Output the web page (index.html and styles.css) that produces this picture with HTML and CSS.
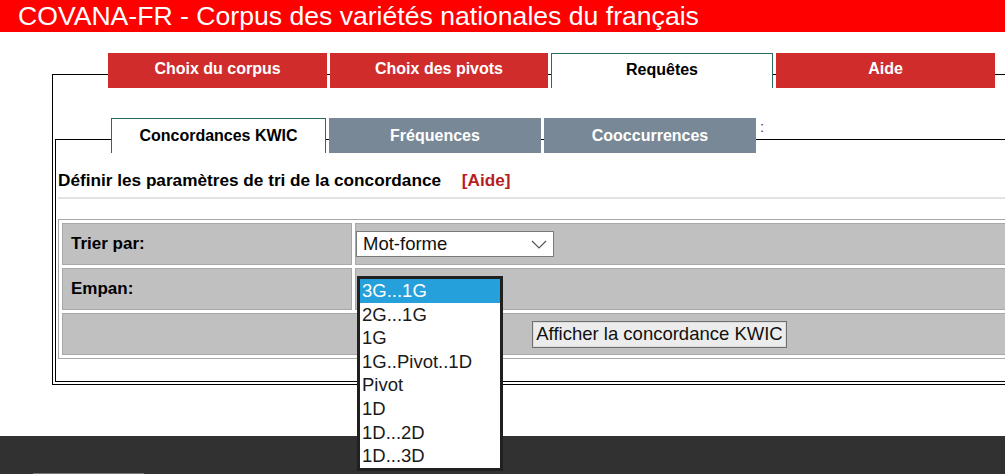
FILE: index.html
```html
<!DOCTYPE html>
<html lang="fr">
<head>
<meta charset="utf-8">
<title>COVANA-FR</title>
<link rel="stylesheet" href="styles.css">
</head>
<body>
<header class="banner">COVANA-FR - Corpus des variétés nationales du français</header>
<div class="page">
  <nav class="tabs main-tabs">
    <a class="tab w219">Choix du corpus</a>
    <a class="tab w218">Choix des pivots</a>
    <a class="tab active w222">Requêtes</a>
    <a class="tab w219">Aide</a>
  </nav>
  <div class="outer">
    <nav class="tabs sub-tabs">
      <a class="subtab active w215">Concordances KWIC</a>
      <a class="subtab w212">Fréquences</a>
      <a class="subtab w212">Cooccurrences</a>
      <span class="colon">:</span>
    </nav>
    <div class="inner">
      <h2 class="heading">Définir les paramètres de tri de la concordance <a class="help">[Aide]</a></h2>
      <div class="rule"></div>
      <table class="form">
        <tr>
          <td class="label">Trier par:</td>
          <td class="field">
            <div class="select">
              <span>Mot-forme</span>
              <svg class="chev" width="16" height="9" viewBox="0 0 16 9"><polyline points="1,1 8,8 15,1" fill="none" stroke="#555" stroke-width="1.2"/></svg>
            </div>
          </td>
        </tr>
        <tr>
          <td class="label">Empan:</td>
          <td class="field popup-host">
            <ul class="popup">
              <li class="sel">3G...1G</li>
              <li>2G...1G</li>
              <li>1G</li>
              <li>1G..Pivot..1D</li>
              <li>Pivot</li>
              <li>1D</li>
              <li>1D...2D</li>
              <li>1D...3D</li>
            </ul>
          </td>
        </tr>
        <tr>
          <td class="submit" colspan="2"><button class="btn">Afficher la concordance KWIC</button></td>
        </tr>
      </table>
    </div>
  </div>
</div>
<footer class="footer"><div class="footbar"></div></footer>
</body>
</html>
```

FILE: styles.css
```css
html, body {
  margin: 0;
  padding: 0;
  overflow: hidden;
  background: #fff;
  font-family: "Liberation Sans", Arial, sans-serif;
}

.banner {
  height: 32px;
  line-height: 32px;
  background: #ff0000;
  color: #fff;
  font-size: 26.6px;
  padding-left: 18px;
  white-space: nowrap;
}

.page {
  margin-left: 52px;
  margin-top: 21px;
  width: 1240px;
}

.tabs {
  display: flex;
  gap: 3px;
  position: relative;
  z-index: 1;
}

.main-tabs {
  padding-left: 56px;
  margin-bottom: -14px;
}

.tab, .subtab {
  box-sizing: border-box;
  height: 35px;
  line-height: 35px;
  text-align: center;
  font-weight: bold;
  font-size: 16px;
  color: #fff;
}

.tab { background: #d02c2c; line-height: 32px; }
.subtab { background: #788896; }

.tab.active, .subtab.active {
  background: #fff;
  color: #000;
  border: 1px solid #2b6a5f;
  border-bottom: none;
}

.tab.active { line-height: 31px; }
.subtab.active { line-height: 34px; }

.w219 { width: 219px; }
.w218 { width: 218px; }
.w222 { width: 222px; }
.w215 { width: 215px; }
.w212 { width: 212px; }

.outer {
  border: 1px solid #000;
  padding: 2px;
}

.sub-tabs {
  margin-top: 41px;
  padding-left: 56px;
  margin-bottom: -14px;
}

.colon {
  font-size: 15px;
  line-height: 18px;
  color: #6b3a2e;
  margin-left: 1px;
  align-self: flex-start;
}

.inner {
  border: 1px solid #000;
  padding: 30px 0 22px 2px;
}

.heading {
  margin: 0;
  font-size: 17.2px;
  line-height: 20px;
  font-weight: bold;
  color: #000;
  white-space: nowrap;
}

.help {
  color: #b51f1f;
  margin-left: 16px;
}

.rule {
  height: 2px;
  background: #e3e3e3;
  margin-top: 7px;
}

.form {
  margin-top: 20px;
  width: 1203px;
  border: 1px solid #a9a9a9;
  border-spacing: 3px;
  border-collapse: separate;
}

.form td {
  box-sizing: border-box;
  height: 42px;
  background: #c0c0c0;
  border: 1px solid #a8a8a8;
  padding: 0;
}

.label {
  width: 290px;
  padding-left: 8px !important;
  font-weight: bold;
  font-size: 17px;
  color: #000;
}

.select {
  box-sizing: border-box;
  width: 198px;
  height: 26px;
  border: 1px solid #7a7a7a;
  background: #fff;
  display: flex;
  align-items: center;
  justify-content: space-between;
  padding: 0 6px 0 6px;
  font-size: 18.5px;
  color: #111;
}

.chev { margin-top: 1px; }

.popup-host { position: relative; }

.popup {
  position: absolute;
  z-index: 5;
  left: 1px;
  top: 7px;
  width: 146px;
  box-sizing: border-box;
  margin: 0;
  padding: 0;
  list-style: none;
  background: #fff;
  border: 3px solid #202020;
}

.popup li {
  line-height: 23.6px;
  height: 23.6px;
  padding-left: 2px;
  font-size: 18.5px;
  color: #1a1a1a;
  white-space: nowrap;
}

.popup li.sel {
  background: #26a0da;
  color: #fff;
}

.submit { text-align: center; }

.btn {
  box-sizing: border-box;
  width: 255px;
  height: 27px;
  padding: 0;
  font-family: "Liberation Sans", Arial, sans-serif;
  font-size: 18.5px;
  color: #111;
  background: #ececec;
  border: 1px solid #6f6f6f;
  box-shadow: inset 0 0 0 1px #dcdcdc;
}

.footer {
  margin-top: 51px;
  height: 38px;
  background: #313131;
  display: flex;
  flex-direction: column;
  justify-content: flex-end;
}

.footbar {
  margin-left: 33px;
  width: 111px;
  height: 1px;
  background: #777;
}
```
